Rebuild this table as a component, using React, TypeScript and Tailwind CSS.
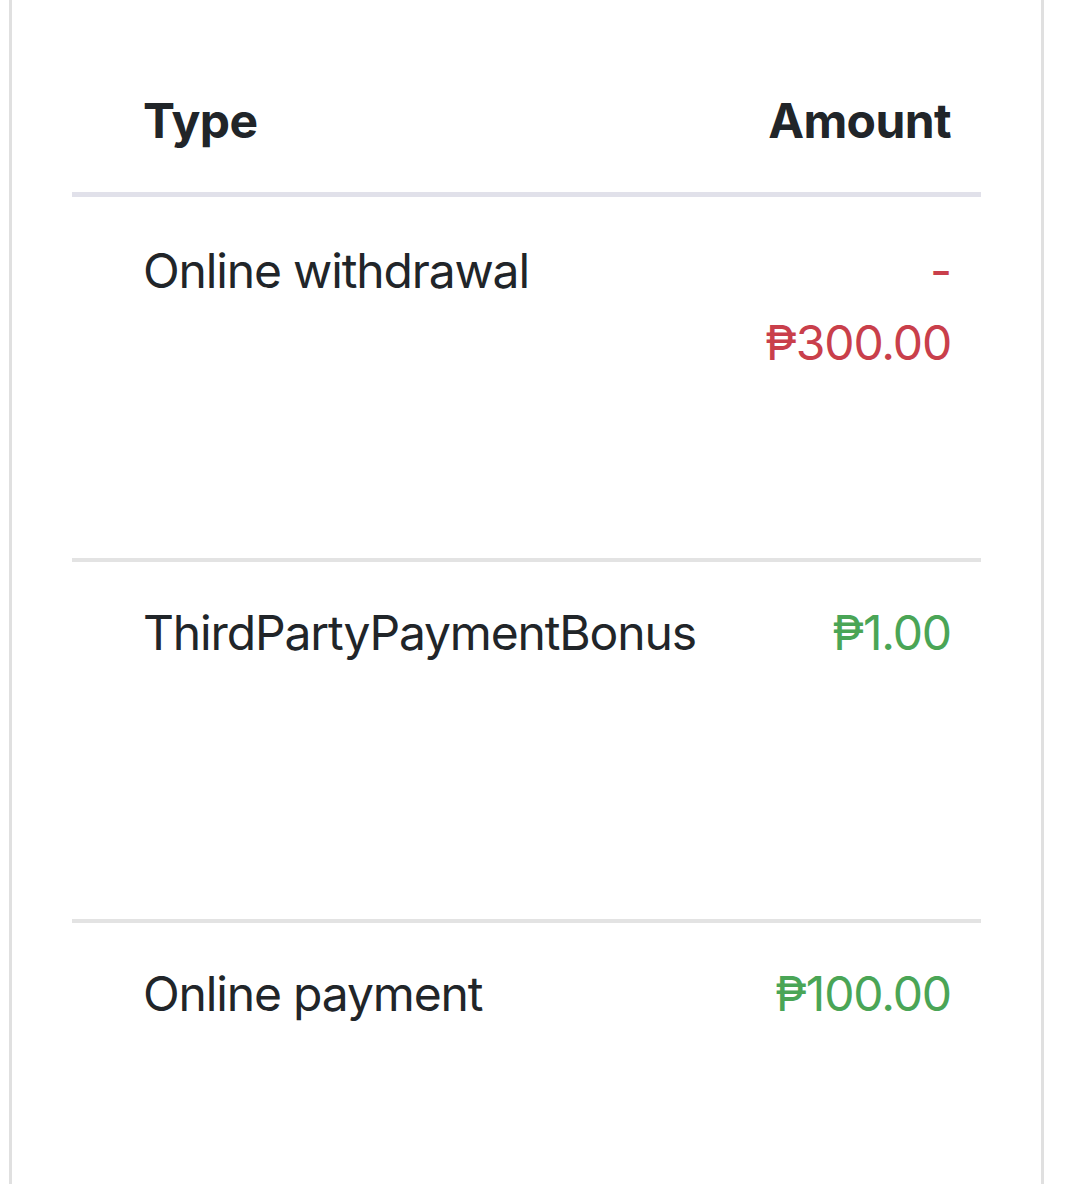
import React from "react";

const rows = [
  { type: "Online withdrawal", amount: "-₱300.00", neg: true },
  { type: "ThirdPartyPaymentBonus", amount: "₱1.00", neg: false },
  { type: "Online payment", amount: "₱100.00", neg: false },
];

export default function App() {
  return (
    <div
      className="w-[1089px] h-[1184px] bg-white overflow-hidden"
      style={{ fontFamily: "Inter, 'Liberation Sans', sans-serif" }}
    >
      <div className="ml-[9px] w-[1035px] h-[1184px] border-x-[3px] border-[#e0e0e0] px-[60px]">
        <div className="flex flex-col text-[#212529] text-[48px] leading-[72px] tracking-[-1.15px]">
          <div className="flex justify-between pt-[85px] pb-[35px] pl-[71px] pr-[30px] font-bold tracking-[-0.6px] border-b-[5px] border-[#e1e1ea]">
            <span>Type</span>
            <span>Amount</span>
          </div>
          {rows.map((r, i) => (
            <div
              key={i}
              className={`flex justify-between pl-[71px] pr-[30px] h-[361px] ${
                i > 0 ? "border-t-[4px] border-[#e3e3e3] pt-[35px]" : "pt-[38px]"
              }`}
            >
              <span>{r.type}</span>
              <span
                className={`text-right ${
                  r.neg ? "text-[#c93f4b] w-[186px]" : "text-[#4aa556]"
                }`}
              >
                {r.amount}
              </span>
            </div>
          ))}
        </div>
      </div>
    </div>
  );
}
